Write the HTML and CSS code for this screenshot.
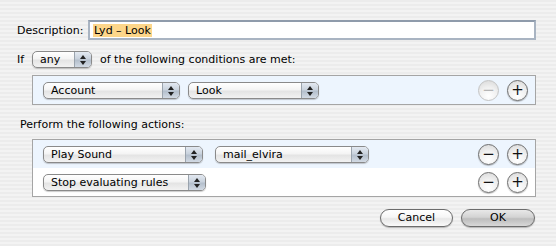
FILE: index.html
```html
<!DOCTYPE html>
<html lang="en">
<head>
    <meta charset="UTF-8">
    <title>Rule</title>
    <link rel="stylesheet" href="styles.css">
</head>
<body>
    <div class="sheet">
        <div class="desc-row">
            <span class="label">Description:</span>
            <div class="text-field"><span class="selected">Lyd – Look</span></div>
        </div>

        <div class="if-row">
            <span class="label">If</span>
            <div class="popup popup-any"><span class="popup-text">any</span><span class="popup-arrows"></span></div>
            <span class="label">of the following conditions are met:</span>
        </div>

        <div class="rule-box">
            <div class="rule-row blue">
                <div class="popup w-account"><span class="popup-text">Account</span><span class="popup-arrows"></span></div>
                <div class="popup w-look"><span class="popup-text">Look</span><span class="popup-arrows"></span></div>
                <div class="row-buttons">
                    <span class="circle-btn disabled">−</span>
                    <span class="circle-btn">+</span>
                </div>
            </div>
        </div>

        <div class="perform-label">Perform the following actions:</div>

        <div class="rule-box actions">
            <div class="rule-row blue">
                <div class="popup w-sound"><span class="popup-text">Play Sound</span><span class="popup-arrows"></span></div>
                <div class="popup w-mail"><span class="popup-text">mail_elvira</span><span class="popup-arrows"></span></div>
                <div class="row-buttons">
                    <span class="circle-btn">−</span>
                    <span class="circle-btn">+</span>
                </div>
            </div>
            <div class="rule-row">
                <div class="popup w-stop"><span class="popup-text">Stop evaluating rules</span><span class="popup-arrows"></span></div>
                <div class="row-buttons">
                    <span class="circle-btn">−</span>
                    <span class="circle-btn">+</span>
                </div>
            </div>
        </div>

        <div class="button-row">
            <span class="push-btn">Cancel</span>
            <span class="push-btn default">OK</span>
        </div>
    </div>
</body>
</html>
```

FILE: styles.css
```css
body {
    margin: 0;
    padding: 0;
    font-family: "DejaVu Sans", "Liberation Sans", sans-serif;
    font-size: 11px;
    color: #000;
    background: repeating-linear-gradient(
        to bottom,
        #ececec 0px,
        #ececec 2px,
        #f3f3f3 2px,
        #f3f3f3 4px
    );
    width: 556px;
    height: 246px;
    overflow: hidden;
}

.sheet {
    padding: 20px 20px 0 17px;
}

.desc-row {
    display: flex;
    align-items: center;
    height: 20px;
}

.desc-row .label {
    width: 71px;
}

.text-field {
    flex: 1;
    height: 16px;
    background: #fff;
    border: 2px solid #a9b4c2;
    border-top-color: #8f9bab;
    display: flex;
    align-items: center;
    padding-left: 3px;
}

.selected {
    background: #fdd68a;
    line-height: 13px;
    padding: 0 1px;
}

.if-row {
    display: flex;
    align-items: center;
    height: 18px;
    margin-top: 10px;
}

.if-row .label:first-child {
    width: 15px;
}

.popup-any {
    width: 60px;
    margin-right: 8px;
}

.popup {
    display: flex;
    height: 17px;
    box-sizing: border-box;
    border: 1px solid #8a8a8a;
    border-radius: 5px;
    background: linear-gradient(to bottom, #ffffff 0%, #f4f4f4 45%, #e4e4e4 55%, #f2f2f2 100%);
    box-shadow: 0 1px 1px rgba(0, 0, 0, 0.2);
    overflow: hidden;
}

.popup-text {
    flex: 1;
    padding-left: 7px;
    line-height: 15px;
    white-space: nowrap;
}

.popup-arrows {
    position: relative;
    width: 16px;
    border-left: 1px solid #9aa3ad;
    background: linear-gradient(to bottom, #e3e9f1 0%, #c9d2dd 45%, #b4bfcc 55%, #d2dae4 100%);
}

.popup-arrows::before,
.popup-arrows::after {
    content: "";
    position: absolute;
    left: 5px;
    border-left: 3px solid transparent;
    border-right: 3px solid transparent;
}

.popup-arrows::before {
    top: 3px;
    border-bottom: 4px solid #222;
}

.popup-arrows::after {
    top: 9px;
    border-top: 4px solid #222;
}

.rule-box {
    margin: 7px 0 0 15px;
    border: 1px solid #a5a5a5;
    background: #fff;
}

.rule-row {
    display: flex;
    align-items: center;
    height: 28px;
    padding: 0 7px 0 10px;
    gap: 8px;
}

.rule-row.blue {
    background: #edf5fe;
}

.actions .rule-row {
    gap: 12px;
}

.w-account { width: 137px; }
.w-look { width: 131px; }
.w-sound { width: 160px; }
.w-mail { width: 154px; }
.w-stop { width: 163px; }

.row-buttons {
    margin-left: auto;
    display: flex;
    gap: 8px;
}

.circle-btn {
    width: 19px;
    height: 19px;
    border-radius: 50%;
    border: 1px solid #6e6e6e;
    background: radial-gradient(circle at 50% 80%, #ffffff 0%, #f0f0f0 50%, #d6d6d6 100%);
    box-shadow: 0 1px 1px rgba(0, 0, 0, 0.25);
    display: flex;
    align-items: center;
    justify-content: center;
    font-size: 15px;
    line-height: 1;
    color: #111;
}

.circle-btn.disabled {
    border-color: #c4c4c4;
    color: #b5b5b5;
    box-shadow: none;
}

.perform-label {
    margin: 13px 0 0 3px;
    height: 14px;
    line-height: 14px;
}

.actions {
    margin-top: 7px;
}

.button-row {
    display: flex;
    justify-content: flex-end;
    gap: 8px;
    margin-top: 12px;
    margin-right: 1px;
}

.push-btn {
    width: 73px;
    height: 18px;
    box-sizing: border-box;
    border: 1px solid #6c6c6c;
    border-radius: 9px;
    background: linear-gradient(to bottom, #ffffff 0%, #f6f6f6 45%, #e7e7e7 55%, #fafafa 100%);
    box-shadow: 0 1px 1px rgba(0, 0, 0, 0.25);
    text-align: center;
    line-height: 16px;
}

.push-btn.default {
    width: 74px;
    background: linear-gradient(to bottom, #e8e8e8 0%, #d3d3d3 45%, #bdbdbd 55%, #d8d8d8 100%);
}
```
